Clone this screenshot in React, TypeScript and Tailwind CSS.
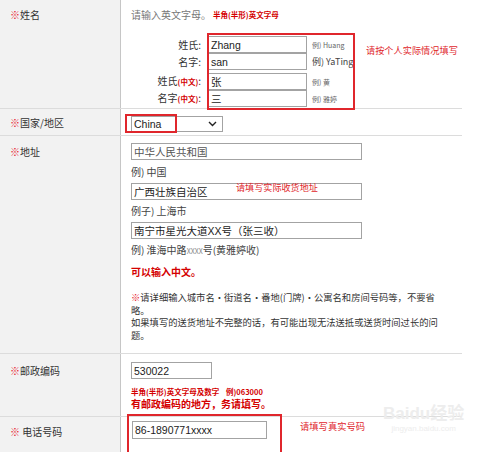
import React from "react";

const inputCls =
  "h-[17px] border border-[#a3a3a3] bg-white px-[2px] flex items-center text-[10.5px] text-[#222] font-['Liberation_Sans','Noto_Sans_CJK_SC',sans-serif]";

const Mark = () => <span className="text-[#e8192c]">※</span>;

const App = () => {
  return (
    <div className="relative w-[500px] h-[452px] overflow-hidden bg-white text-[10px] leading-[12px] text-[#333] font-['Noto_Sans_CJK_SC','Liberation_Sans',sans-serif]">
      <div className="w-[462px]">
        {/* 姓名 */}
        <div className="flex h-[109px] border-b border-[#dcdcdc]">
          <div className="w-[121px] shrink-0 bg-[#f2f2f2] border-r border-[#c6c6c6] pl-[10px] pt-[9px]">
            <Mark />姓名
          </div>
          <div className="flex-1 pl-[10px] pt-[9px]">
            <div className="flex items-center h-[12px]">
              <span className="text-[#777]">请输入英文字母。</span>
              <span className="ml-[2px] text-[7.5px] font-bold text-[#d40000]">半角(半形)英文字母</span>
            </div>
            <div className="mt-[15px] flex flex-col">
              <div className="flex items-center h-[17px]">
                <span className="w-[70px] text-right">姓氏:</span>
                <div className={`ml-[7px] w-[99px] ${inputCls}`}>Zhang</div>
                <span className="ml-[5px] text-[7px] text-[#666]">例) Huang</span>
              </div>
              <div className="flex items-center h-[17px]">
                <span className="w-[70px] text-right">名字:</span>
                <div className={`ml-[7px] w-[99px] ${inputCls}`}>san</div>
                <span className="ml-[5px] text-[9px] text-[#444]">例) YaTing</span>
              </div>
              <div className="mt-[3px] flex items-center h-[17px]">
                <span className="w-[70px] text-right">
                  姓氏<span className="text-[7.5px] font-bold text-[#d40000]">(中文)</span>:
                </span>
                <div className={`ml-[7px] w-[99px] ${inputCls}`}>张</div>
                <span className="ml-[5px] text-[7px] text-[#666]">例) 黄</span>
              </div>
              <div className="flex items-center h-[17px]">
                <span className="w-[70px] text-right">
                  名字<span className="text-[7.5px] font-bold text-[#d40000]">(中文)</span>:
                </span>
                <div className={`ml-[7px] w-[99px] ${inputCls}`}>三</div>
                <span className="ml-[5px] text-[7px] text-[#666]">例) 雅婷</span>
              </div>
            </div>
          </div>
        </div>

        {/* 国家/地区 */}
        <div className="flex h-[27px] border-b border-[#dcdcdc]">
          <div className="w-[121px] shrink-0 bg-[#f2f2f2] border-r border-[#c6c6c6] pl-[10px] pt-[8px]">
            <Mark />国家/地区
          </div>
          <div className="flex-1 pl-[10px] pt-[7px]">
            <div className="w-[92px] h-[16px] border border-[#a3a3a3] bg-white flex items-center justify-between pl-[2px] pr-[5px] text-[10.5px] text-[#222] font-['Liberation_Sans',sans-serif]">
              <span>China</span>
              <svg width="9" height="6" viewBox="0 0 9 6" fill="none">
                <path d="M1 1l3.5 3.5L8 1" stroke="#222" strokeWidth="1.4" />
              </svg>
            </div>
          </div>
        </div>

        {/* 地址 */}
        <div className="flex h-[218px] border-b border-[#dcdcdc]">
          <div className="w-[121px] shrink-0 bg-[#f2f2f2] border-r border-[#c6c6c6] pl-[10px] pt-[10px]">
            <Mark />地址
          </div>
          <div className="flex-1 pl-[10px] pt-[7px]">
            <div className={`w-[231px] ${inputCls} text-[#555]`}>中华人民共和国</div>
            <div className="mt-[6px] text-[#444]">例) 中国</div>
            <div className={`mt-[5px] w-[231px] ${inputCls}`}>广西壮族自治区</div>
            <div className="mt-[5px] text-[#444]">例子) 上海市</div>
            <div className={`mt-[5px] w-[231px] ${inputCls}`}>南宁市星光大道XX号（张三收）</div>
            <div className="mt-[5px] text-[#444]">
              例) 淮海中路<span className="text-[7px] text-[#888]">XXXX</span>号(黄雅婷收)
            </div>
            <div className="mt-[9px] font-bold text-[#d40000]">可以输入中文。</div>
            <div className="mt-[13px] leading-[12.5px] whitespace-nowrap text-[9.3px] text-[#333]">
              <Mark />请详细输入城市名・街道名・番地(门牌)・公寓名和房间号码等，不要省
              <br />略。
              <br />如果填写的送货地址不完整的话，有可能出现无法送抵或送货时间过长的问
              <br />题。
            </div>
          </div>
        </div>

        {/* 邮政编码 */}
        <div className="flex h-[63px] border-b border-[#dcdcdc]">
          <div className="w-[121px] shrink-0 bg-[#f2f2f2] border-r border-[#c6c6c6] pl-[10px] pt-[11px]">
            <Mark />邮政编码
          </div>
          <div className="flex-1 pl-[10px] pt-[8px]">
            <div className={`w-[81px] ${inputCls}`}>530022</div>
            <div className="mt-[8px] h-[10px] leading-[10px] text-[7.5px] font-bold text-[#d40000] whitespace-nowrap">
              半角(半形)英文字母及数字&nbsp;&nbsp;&nbsp;&nbsp;例)063000
            </div>
            <div className="mt-[1px] font-bold text-[10px] text-[#d40000]">有邮政编码的地方，务请填写。</div>
          </div>
        </div>

        {/* 电话号码 */}
        <div className="flex h-[40px]">
          <div className="w-[121px] shrink-0 bg-[#f2f2f2] border-r border-[#c6c6c6] pl-[10px] pt-[9px]">
            <Mark /> 电话号码
          </div>
          <div className="flex-1 pl-[11px] pt-[4px]">
            <div className={`w-[135px] h-[18px] ${inputCls}`}>86-1890771xxxx</div>
          </div>
        </div>
      </div>

      {/* red annotations */}
      <div className="absolute left-[207px] top-[33px] w-[148px] h-[77px] border-2 border-[#e0262c]" />
      <div className="absolute left-[366px] top-[44px] text-[9.2px] text-[#e0262c]">请按个人实际情况填写</div>
      <div className="absolute left-[125px] top-[114px] w-[52px] h-[19px] border-2 border-[#e0262c]" />
      <div className="absolute left-[236px] top-[181px] text-[9.1px] text-[#e0262c]">请填写实际收货地址</div>
      <div className="absolute left-[127px] top-[414px] w-[155px] h-[42px] border-2 border-[#e0262c]" />
      <div className="absolute left-[300px] top-[420px] text-[9.3px] text-[#e0262c]">请填写真实号码</div>

      {/* watermark */}
      <div className="absolute left-[383px] top-[404px] flex flex-col items-center text-[#ededed]">
        <span className="text-[17px] leading-[20px] font-bold font-['Liberation_Sans','Noto_Sans_CJK_SC',sans-serif]">Baidu经验</span>
        <span className="text-[8px] leading-[10px] font-['Liberation_Sans',sans-serif]">jingyan.baidu.com</span>
      </div>
    </div>
  );
};

export default App;
